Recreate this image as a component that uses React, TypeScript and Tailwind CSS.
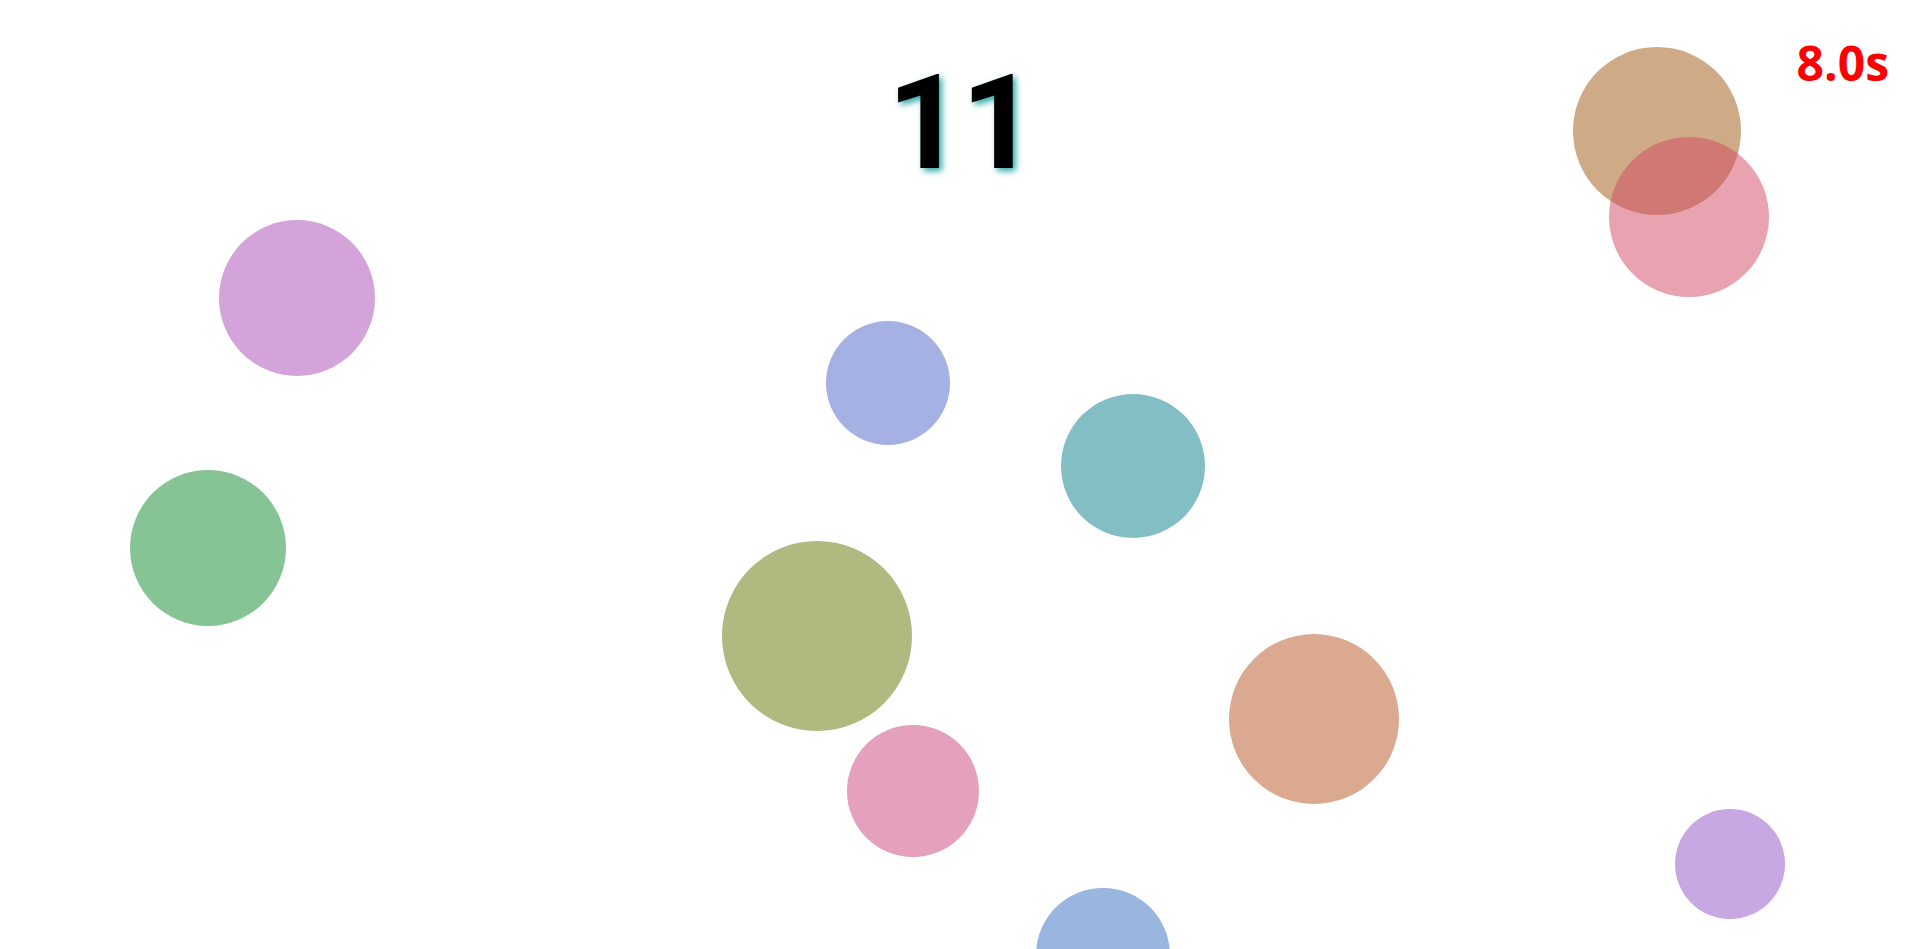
import React from "react";

const balls: string[] = [
  "left-[219px] top-[220px] size-[156px] bg-[#d4a3da]",
  "left-[130px] top-[470px] size-[156px] bg-[#86c395]",
  "left-[826px] top-[321px] size-[124px] bg-[#a6b1e3]",
  "left-[1061px] top-[394px] size-[144px] bg-[#83bec5]",
  "left-[722px] top-[541px] size-[190px] bg-[#afb980]",
  "left-[847px] top-[725px] size-[132px] bg-[#e4a0bc]",
  "left-[1229px] top-[634px] size-[170px] bg-[#dba98f]",
  "left-[1573px] top-[47px] size-[168px] bg-[#ceab86]",
  "left-[1609px] top-[137px] size-[160px] bg-[rgba(209,69,97,0.5)]",
  "left-[1675px] top-[809px] size-[110px] bg-[#c8a8e2]",
  "left-[1036px] top-[888px] size-[134px] bg-[#98b6df]",
];

export default function App() {
  return (
    <div className="relative w-screen h-screen overflow-hidden bg-white">
      {balls.map((cls, i) => (
        <div key={i} className={`absolute rounded-full ${cls}`} />
      ))}
      <div className="relative pt-[57px] pl-[8px] text-center text-[132px] leading-none font-bold text-black font-['Roboto','Liberation_Sans',sans-serif] tracking-[-2px] [text-shadow:3px_3px_6px_rgba(0,150,150,0.85)]">
        11
      </div>
      <div className="absolute top-[39px] right-[25px] text-[48px] leading-none font-bold text-[#ff0000] font-['Open_Sans','Noto_Sans',sans-serif]">
        8.0s
      </div>
    </div>
  );
}
